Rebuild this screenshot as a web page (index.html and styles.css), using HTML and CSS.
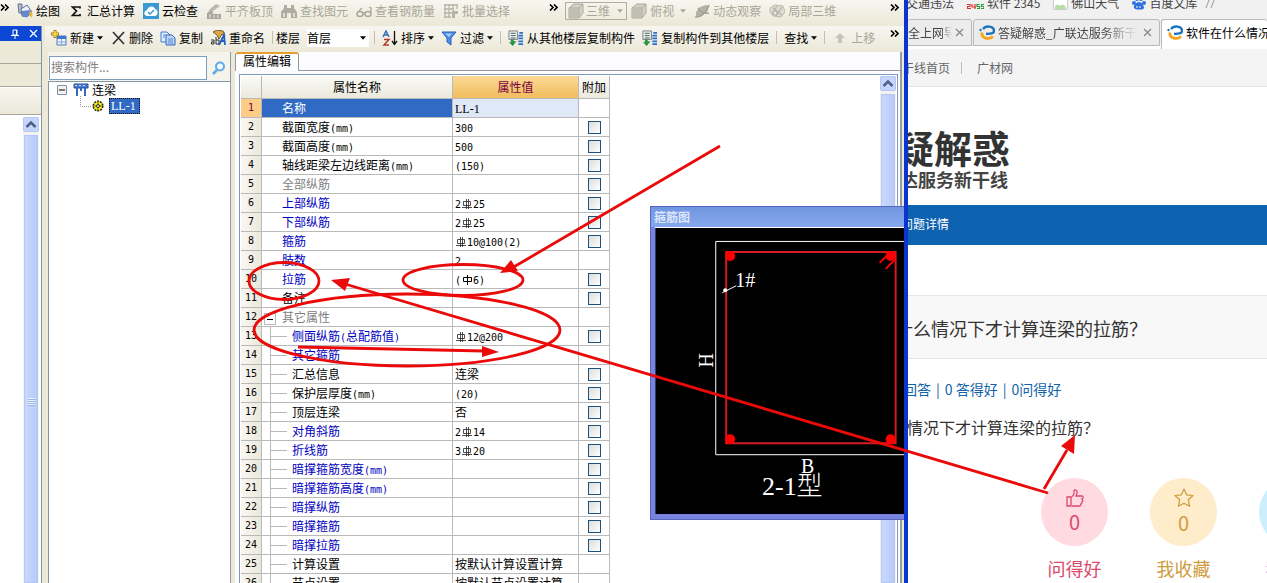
FILE: index.html
```html
<!DOCTYPE html>
<html lang="zh-CN">
<head>
<meta charset="utf-8">
<title>属性编辑</title>
<link rel="stylesheet" href="styles.css">
</head>
<body>
<svg class="defs" width="0" height="0" aria-hidden="true">
  <symbol id="rebar" viewBox="0 0 12 12"><path d="M2.500 3.500h7v4h-7zM5.500 1v10M7.500 1v10M1 9.500h10" fill="none" stroke="#222" stroke-width=".8"/></symbol>
  <symbol id="rebar-plain" viewBox="0 0 12 12"><path d="M2.500 3.500h8v4h-8zM6.500 1v10" fill="none" stroke="#000"/></symbol>
  <symbol id="caret" viewBox="0 0 7 4"><path d="M0 0h7L3.500 4z" fill="currentColor"/></symbol>
  <symbol id="more" viewBox="0 0 9 7"><path d="M1 .5l3 3-3 3M5 .5l3 3-3 3" fill="none" stroke="#000" stroke-width="1.600"/></symbol>
  <symbol id="swirl" viewBox="0 0 16 16"><path d="M4 4C7 0 15 1 15 6c0 2.500-4 3-8 2.800" fill="none" stroke="#1a75bd" stroke-width="2.400"/><path d="M3 7.500c-1 6 7 7.500 11 4" fill="none" stroke="#f6a21b" stroke-width="2.800"/><circle cx="1.500" cy="5" r="1.200" fill="#1a75bd"/></symbol>
  <symbol id="cube" viewBox="0 0 16 16"><path d="M1 5l5-4h9v9l-4 5H1z" fill="#d4d1c5" stroke="#aaa79c"/><path d="M1.500 5H11v10M11 5l4-4" fill="none" stroke="#aaa79c"/><path d="M2 6h8v8H2z" fill="#c1beb3"/></symbol>
  <symbol id="floors" viewBox="0 0 17 17"><path d="M1 1h9v9H1z" fill="#e7f2e7" stroke="#778"/><path d="M3 3.500h5M3 6h5M3 8.500h5" stroke="#456"/><path d="M12 3h4M11 6h5M11 9h5M11 12h5M11 15h5" stroke="#2b70c9" stroke-width="1.800"/><path d="M3 10h3v2h3l-4 5-4-4h2z" fill="#299445"/></symbol>
  <symbol id="up" viewBox="0 0 15 14"><path d="M2.500 9L7 4.500 11.500 9" fill="none" stroke="#4d6185" stroke-width="2.500"/></symbol>
</svg>

<section class="app" aria-label="构件属性">
  <div class="toolbar toolbar-main">
    <svg class="more"><use href="#more"/></svg>
    <div class="tools">
      <button class="tool"><svg class="ico" viewBox="0 0 16 16"><path d="M1 1h4v9H2z" fill="#b5bed0" stroke="#65718a"/><path d="M4 6l6-4 5 7-5 5-5-1z" fill="#e9eefa" stroke="#5b6d9b"/><path d="M5 8l8-1 2 3-5 4-5-1z" fill="#6888cc"/><path d="M13 8c3 1 3 6 1 6s-2-3-1-6z" fill="#e6b634"/></svg>绘图</button>
      <button class="tool"><svg class="ico" viewBox="0 0 16 16"><path d="M12 5.500V4H4.500l4 4-4 4.500H12V11" fill="none" stroke="#111" stroke-width="1.700"/></svg>汇总计算</button>
      <button class="tool"><svg class="ico" viewBox="0 0 16 16"><path d="M0 0h16v16H0z" fill="#399ad3"/><path d="M4 13c-4-1-3-5 0-6 1-4 7-5 8-1 4 1 3 7 0 7z" fill="#fff"/><path d="M5 9l2 2 4-4" fill="none" stroke="#399ad3" stroke-width="1.500"/></svg>云检查</button>
      <button class="tool" disabled><svg class="ico" viewBox="0 0 16 16"><path d="M3 7l7-6 4 2-7 5v3H2z" fill="#bbb8ad"/><path d="M1 10l5-2v3h9v5H1z" fill="#a9a69b"/><path d="M4 11v4M8 12v3M12 12v3" stroke="#eee"/></svg>平齐板顶</button>
      <button class="tool" disabled><svg class="ico" viewBox="0 0 16 16"><path d="M3 2h3v3h4V2h3v3l3 4v6h-6v-5H6v5H0V9l3-4z" fill="#aeaba1"/><path d="M2 10h2v4H2zM12 10h2v4h-2z" fill="#dedbd0"/></svg>查找图元</button>
      <button class="tool" disabled><svg class="ico" viewBox="0 0 16 16"><ellipse cx="4" cy="11" rx="3" ry="2.500" fill="none" stroke="#aaa79c" stroke-width="1.500"/><ellipse cx="12" cy="11" rx="3" ry="2.500" fill="none" stroke="#aaa79c" stroke-width="1.500"/><path d="M7 10h2M3 8l3-3M15 9V5l-2-1" fill="none" stroke="#aaa79c" stroke-width="1.300"/></svg>查看钢筋量</button>
      <button class="tool" disabled><svg class="ico" viewBox="0 0 16 16"><path d="M1 2h14M1 6h10M1 10h8M1 14h7M2 1v14M6 1v14M10 1v9M14 1v5" stroke="#b7b4a9" stroke-width="1.300"/><path d="M9 8h6v3h-3v4H9z" fill="#b7b4a9"/></svg>批量选择</button>
    </div>
    <svg class="more"><use href="#more"/></svg>
    <div class="tools tools-view">
      <button class="tool tool-boxed" disabled><svg class="ico"><use href="#cube"/></svg>三维<svg class="caret"><use href="#caret"/></svg></button>
      <button class="tool tool-drop" disabled><svg class="ico"><use href="#cube"/></svg>俯视<svg class="caret"><use href="#caret"/></svg></button>
      <button class="tool" disabled><svg class="ico" viewBox="0 0 16 16"><path d="M2 9l4-5 6-2 3 1-2 6-6 4-5 1z" fill="#b5b2a7"/><path d="M1 14c6 1 12-5 14-12M4 5c3 5 7 6 11 5" fill="none" stroke="#a09d92" stroke-width="1.400"/></svg>动态观察</button>
      <button class="tool" disabled><svg class="ico" viewBox="0 0 16 16"><path d="M1 5l5-3 8 1 2 6-4 5-8-1-3-4z" fill="#dedbd0" stroke="#bdbab0"/><path d="M3 11l5-8M7 13l6-9M4 5l9 7" stroke="#b7b4a9" stroke-width="1.300"/><circle cx="6" cy="10" r="2" fill="#eee" stroke="#aaa"/></svg>局部三维</button>
    </div>
    <svg class="more more-end"><use href="#more"/></svg>
  </div>

  <div class="workspace">
    <aside class="dock">
      <div class="dock-title"><svg width="10" height="10" viewBox="0 0 10 10"><path d="M3 1h4v5H3zM1 6.500h8M5 7v3M6.500 1v5" fill="none" stroke="#fff"/></svg><svg width="9" height="9" viewBox="0 0 9 9"><path d="M1 1l7 7M8 1L1 8" stroke="#fff" stroke-width="1.200"/></svg></div>
      <div class="dock-row"></div><div class="dock-row"></div><div class="dock-row dock-row-last"></div>
      <div class="dock-list"><div class="scroll"><div class="scroll-btn"><svg width="15" height="14"><use href="#up"/></svg></div><div class="scroll-thumb"><i class="grip"></i></div></div></div>
    </aside>

    <div class="editor">
      <div class="toolbar toolbar-edit">
        <button class="tool"><svg class="ico" viewBox="0 0 16 16"><path d="M6 6h9v9H6z" fill="#edf3fc" stroke="#5278b5"/><path d="M6 6h9v3H6z" fill="#3d76cc"/><path d="M10.500 9v6M6 12h9" stroke="#88a8d8"/><path d="M4 0v8M0 4h8" stroke="#a37d09" stroke-width="3"/><path d="M4 1v6M1 4h6" stroke="#ffe152" stroke-width="1.500"/></svg>新建<svg class="caret"><use href="#caret"/></svg></button>
        <button class="tool"><svg class="ico" viewBox="0 0 16 16"><path d="M3 2l11 12M14 2L3 14" stroke="#333" stroke-width="1.700"/></svg>删除</button>
        <button class="tool"><svg class="ico" viewBox="0 0 16 16"><path d="M1 2h6l3 3v7H1z" fill="#dceaff" stroke="#4c7ac6"/><path d="M6 5h6l3 3v7H6z" fill="#bed6fb" stroke="#3565b4"/><path d="M8 9h5M8 11h5M8 13h5M3 5h3M3 7h2" stroke="#568ad6"/></svg>复制</button>
        <button class="tool"><svg class="ico" viewBox="0 0 16 16"><path d="M3 2l4-2 6 1 2 5-3-2-3 5-2-4z" fill="#dda944" stroke="#765b2d"/><path d="M1 10h3v4H1.500v-2H4M6 7v7h3v-4H6" fill="none" stroke="#333"/><path d="M9 15l5-10 1 10M11 11h4" fill="none" stroke="#2360bd" stroke-width="1.800"/></svg>重命名</button>
        <i class="sep"></i>
        <label class="floor-label" for="floor">楼层</label>
        <span class="floor"><select id="floor"><option>首层</option></select><svg class="caret"><use href="#caret"/></svg></span>
        <i class="sep"></i>
        <button class="tool"><svg class="ico" viewBox="0 0 16 16"><path d="M1 7l3-6 3 6M2 5h4" fill="none" stroke="#366bb5" stroke-width="1.500"/><path d="M2 9.500h5L2 15h5" fill="none" stroke="#b5392b" stroke-width="1.500"/><path d="M12.500 1v13M10 11l2.500 3.500L15 11" fill="none" stroke="#111" stroke-width="1.300"/></svg>排序<svg class="caret"><use href="#caret"/></svg></button>
        <button class="tool"><svg class="ico" viewBox="0 0 16 16"><path d="M1 2h14l-5 6v7l-4-3V8z" fill="#4c8ee8" stroke="#2862b9"/><path d="M4 3.500h7L8 7z" fill="#a8cbff"/></svg>过滤<svg class="caret"><use href="#caret"/></svg></button>
        <i class="sep"></i>
        <button class="tool"><svg class="ico"><use href="#floors"/></svg>从其他楼层复制构件</button>
        <button class="tool"><svg class="ico"><use href="#floors"/></svg>复制构件到其他楼层</button>
        <i class="sep"></i>
        <button class="tool">查找<svg class="caret"><use href="#caret"/></svg></button>
        <i class="sep"></i>
        <button class="tool" disabled><svg class="ico" viewBox="0 0 16 16"><path d="M8 3l5 5h-3v5H6V8H3z" fill="#c6c3b8"/></svg>上移</button>
        <svg class="more more-end"><use href="#more"/></svg>
      </div>

      <div class="panes">
        <div class="parts">
          <div class="search"><input type="text" aria-label="搜索构件" placeholder="搜索构件..."><button class="search-btn" aria-label="搜索"><svg width="14" height="14" viewBox="0 0 14 14"><circle cx="8" cy="5.500" r="4" fill="#eef8ff" stroke="#62a8e2" stroke-width="2"/><path d="M5 9l-4 4" stroke="#62a8e2" stroke-width="2.500"/></svg></button></div>
          <div class="tree">
            <div class="node"><svg width="10" height="10" viewBox="0 0 10 10"><path d="M.5.500h9v9h-9z" fill="#f4f2ea" stroke="#7b93b0"/><path d="M2 5h6" stroke="#000"/></svg><svg class="beam" width="16" height="14" viewBox="0 0 16 14"><path d="M1 1h14v4H1z" fill="#4c7bcf" stroke="#244e9d"/><path d="M4 5v8M8 5v3M12 5v8" stroke="#3668bb" stroke-width="2"/><path d="M2 2.500h12" stroke="#c3d8ff" stroke-dasharray="2 2"/></svg>连梁</div>
            <div class="node node-child"><svg class="twig" width="12" height="12"><path d="M.5 0v10.500H12" fill="none" stroke="#9a9a9a" stroke-dasharray="1 1"/></svg><svg width="12" height="12" viewBox="0 0 12 12"><circle cx="6" cy="6" r="4.800" fill="#f6ec18" stroke="#222" stroke-width="1.500" stroke-dasharray="2 1"/><circle cx="6" cy="6" r="1.500" fill="#fff" stroke="#222"/><path d="M6 1v3M6 8v3M1 6h3M8 6h3" stroke="#665f00"/></svg><span class="picked">LL-1</span></div>
          </div>
        </div>

        <div class="props">
          <div class="tabs"><button class="tab">属性编辑</button></div>
          <div class="frame">
            <table class="grid">
              <thead><tr><th class="num"></th><th class="name">属性名称</th><th class="val hot">属性值</th><th class="chk">附加</th></tr></thead>
              <tbody>
              <tr class="sel"><th>1</th><td>名称</td><td><b class="serif">LL-1</b></td><td></td></tr>
              <tr><th>2</th><td>截面宽度<b>(mm)</b></td><td><b>300</b></td><td><input type="checkbox" aria-label="附加 2"></td></tr>
              <tr><th>3</th><td>截面高度<b>(mm)</b></td><td><b>500</b></td><td><input type="checkbox" aria-label="附加 3"></td></tr>
              <tr><th>4</th><td>轴线距梁左边线距离<b>(mm)</b></td><td><b>(150)</b></td><td><input type="checkbox" aria-label="附加 4"></td></tr>
              <tr class="mute"><th>5</th><td>全部纵筋</td><td></td><td><input type="checkbox" aria-label="附加 5"></td></tr>
              <tr class="blue"><th>6</th><td>上部纵筋</td><td><b>2</b><svg class="bar"><use href="#rebar"/></svg><b>25</b></td><td><input type="checkbox" aria-label="附加 6"></td></tr>
              <tr class="blue"><th>7</th><td>下部纵筋</td><td><b>2</b><svg class="bar"><use href="#rebar"/></svg><b>25</b></td><td><input type="checkbox" aria-label="附加 7"></td></tr>
              <tr class="blue"><th>8</th><td>箍筋</td><td><svg class="bar"><use href="#rebar"/></svg><b>10@100(2)</b></td><td><input type="checkbox" aria-label="附加 8"></td></tr>
              <tr class="blue"><th>9</th><td>肢数</td><td><b>2</b></td><td></td></tr>
              <tr class="blue"><th>10</th><td>拉筋</td><td><b>(</b><svg class="bar"><use href="#rebar-plain"/></svg><b>6)</b></td><td><input type="checkbox" aria-label="附加 10"></td></tr>
              <tr><th>11</th><td>备注</td><td></td><td><input type="checkbox" aria-label="附加 11"></td></tr>
              <tr class="mute group"><th>12</th><td><button class="fold" aria-label="折叠"></button>其它属性</td><td></td><td></td></tr>
              <tr class="blue sub"><th>13</th><td>侧面纵筋<b>(</b>总配筋值<b>)</b></td><td><svg class="bar"><use href="#rebar"/></svg><b>12@200</b></td><td><input type="checkbox" aria-label="附加 13"></td></tr>
              <tr class="blue sub"><th>14</th><td>其它箍筋</td><td></td><td></td></tr>
              <tr class="sub"><th>15</th><td>汇总信息</td><td>连梁</td><td><input type="checkbox" aria-label="附加 15"></td></tr>
              <tr class="sub"><th>16</th><td>保护层厚度<b>(mm)</b></td><td><b>(20)</b></td><td><input type="checkbox" aria-label="附加 16"></td></tr>
              <tr class="sub"><th>17</th><td>顶层连梁</td><td>否</td><td><input type="checkbox" aria-label="附加 17"></td></tr>
              <tr class="blue sub"><th>18</th><td>对角斜筋</td><td><b>2</b><svg class="bar"><use href="#rebar"/></svg><b>14</b></td><td><input type="checkbox" aria-label="附加 18"></td></tr>
              <tr class="blue sub"><th>19</th><td>折线筋</td><td><b>3</b><svg class="bar"><use href="#rebar"/></svg><b>20</b></td><td><input type="checkbox" aria-label="附加 19"></td></tr>
              <tr class="blue sub"><th>20</th><td>暗撑箍筋宽度<b>(mm)</b></td><td></td><td><input type="checkbox" aria-label="附加 20"></td></tr>
              <tr class="blue sub"><th>21</th><td>暗撑箍筋高度<b>(mm)</b></td><td></td><td><input type="checkbox" aria-label="附加 21"></td></tr>
              <tr class="blue sub"><th>22</th><td>暗撑纵筋</td><td></td><td><input type="checkbox" aria-label="附加 22"></td></tr>
              <tr class="blue sub"><th>23</th><td>暗撑箍筋</td><td></td><td><input type="checkbox" aria-label="附加 23"></td></tr>
              <tr class="blue sub"><th>24</th><td>暗撑拉筋</td><td></td><td><input type="checkbox" aria-label="附加 24"></td></tr>
              <tr class="sub"><th>25</th><td>计算设置</td><td>按默认计算设置计算</td><td></td></tr>
              <tr class="sub"><th>26</th><td>节点设置</td><td>按默认节点设置计算</td><td></td></tr>
              </tbody>
            </table>
            <div class="scroll"><div class="scroll-btn"><svg width="15" height="14"><use href="#up"/></svg></div><div class="scroll-thumb"></div></div>
          </div>
        </div>
      </div>
    </div>
  </div>

  <div class="float" role="dialog" aria-label="箍筋图">
    <div class="float-title">箍筋图</div>
    <svg class="section" width="260" height="287" viewBox="655 228 260 287">
      <path d="M655 228h260v287H655z" fill="#000"/>
      <path d="M915 241.500H715.500v214H915" fill="none" stroke="#fff"/>
      <path d="M726 252h170v192H726z" fill="none" stroke="#d51a20" stroke-width="2"/>
      <g fill="#f00"><circle cx="730" cy="256" r="5"/><circle cx="891" cy="256" r="5"/><circle cx="730" cy="440" r="5"/><circle cx="891" cy="440" r="5"/></g>
      <path d="M880 263l8-8M886 269l9-9" stroke="#f00" stroke-width="2"/>
      <path d="M722 293l14-7" stroke="#fff"/><circle cx="725" cy="290.500" r="2" fill="#fff"/>
      <g class="cad"><text x="735" y="287">1#</text><text x="801" y="474">B</text><text x="762" y="496" class="cad-big">2-1型</text><text transform="translate(713 368) rotate(-90)">H</text></g>
    </svg>
  </div>
</section>

<section class="browser" aria-label="浏览器">
  <nav class="bookmarks">
    <a href="#" class="first">交通违法</a>
    <a href="#"><svg width="17" height="14" viewBox="0 0 17 14"><path d="M0 8.500h3v2H.5v2H4M5 8v3h4M8 8v5" fill="none" stroke="#d33" stroke-width="1.200"/><path d="M12.500 8.500H10v2h2.500v2H10M17 8.500h-2.500v2H17v2h-3" fill="none" stroke="#2a9a3a" stroke-width="1.200"/></svg>软件 2345</a>
    <a href="#"><svg width="15" height="14" viewBox="0 0 15 14"><path d="M.5.500h14v13H.5z" fill="#fff" stroke="#ccc"/><path d="M2 13c-1-5 4-5 5-3 3-3 6 0 6 3z" fill="#b9dda9"/></svg>佛山天气</a>
    <a href="#"><svg width="14" height="14" viewBox="0 0 14 14"><g fill="#2d71df"><circle cx="2" cy="7" r="2"/><circle cx="5" cy="3" r="2"/><circle cx="9" cy="3" r="2"/><circle cx="12" cy="7" r="2"/><path d="M7 6c3 0 5 4 5 6s-9 2-10 0 2-6 5-6z"/></g><path d="M5 10v2M8 10v2" stroke="#fff"/></svg>百度文库</a>
    <svg class="book-more" width="11" height="9" viewBox="0 0 11 9"><path d="M4 0L1 8M9 0L6 8" fill="none" stroke="#999"/></svg>
  </nav>
  <div class="btabs">
    <div class="btab btab-first"><span>全上网导</span><button aria-label="关闭"><svg width="9" height="9" viewBox="0 0 9 9"><path d="M1 1l7 7M8 1L1 8" stroke="#888" stroke-width="1.300"/></svg></button></div>
    <div class="btab btab-mid"><svg class="ico"><use href="#swirl"/></svg><span>答疑解惑_广联达服务新干</span><button aria-label="关闭"><svg width="9" height="9" viewBox="0 0 9 9"><path d="M1 1l7 7M8 1L1 8" stroke="#888" stroke-width="1.300"/></svg></button></div>
    <div class="btab btab-on"><svg class="ico"><use href="#swirl"/></svg><span>软件在什么情况下</span></div>
  </div>
  <nav class="sitebar"><a href="#">干线首页</a><i></i><a href="#">广材网</a></nav>
  <header class="brand"><div class="brand-big">疑解惑</div><div class="brand-sub">达服务新干线</div></header>
  <div class="crumb">问题详情</div>
  <h1 class="title">什么情况下才计算连梁的拉筋<span class="mark">？</span></h1>
  <p class="stats"><span>回答</span>|<span>0 答得好</span>|<span>0问得好</span></p>
  <p class="question">情况下才计算连梁的拉筋<span class="mark">？</span></p>
  <div class="votes">
    <button class="vote vote-good"><span class="disc"><svg width="18" height="18" viewBox="0 0 18 18"><path d="M1 8h4v9H1zM5 8c3-1 3-3 3-6 0-2 4-1 3 2l-1 3h6c2 0 1 3 0 3 1 1 1 2 0 3 0 1 0 2-1 2 0 1-1 2-2 2H6" fill="none" stroke="currentColor" stroke-width="1.300"/></svg>0</span>问得好</button>
    <button class="vote vote-fav"><span class="disc"><svg width="20" height="20" viewBox="0 0 20 20"><path d="M10 1l2.600 5.800 6.400.7-4.700 4.300 1.300 6.500L10 15.200l-5.600 3.100 1.300-6.500L1 7.500l6.400-.7z" fill="none" stroke="currentColor" stroke-width="1.200" stroke-linejoin="round"/></svg>0</span>我收藏</button>
    <button class="vote vote-more"><span class="disc"></span>我来答</button>
  </div>
</section>

<svg class="marks" width="1267" height="583" viewBox="0 0 1267 583" aria-hidden="true">
  <g fill="none" stroke="#eb0a0a" stroke-width="2.800">
    <ellipse cx="284" cy="281" rx="35" ry="18.500"/>
    <ellipse cx="463" cy="280" rx="60" ry="15.500"/>
    <ellipse cx="407" cy="330" rx="153" ry="36"/>
    <path d="M720 146L512 268M298 347l186 4M1048 493L345 284M1044 489l23-39"/>
  </g>
  <path d="M500 273l11-13 7 11zM499 352l-17-6v11zM331 280l19-2-5 13zM1075 435l-14 11 13 8z" fill="#eb0a0a"/>
</svg>
</body>
</html>
```
FILE: styles.css
```css
* { box-sizing: border-box; }
body {
  margin: 0;
  height: 100vh;
  overflow: hidden;
  position: relative;
  display: grid;
  grid-template-columns: 908fr 359fr;
  background: #fff;
  color: #000;
  font: 12px/16px "Noto Sans CJK SC", sans-serif;
}
button, input, select { font: inherit; color: inherit; }
button { border: 0; padding: 0; background: none; }
svg { flex: none; }
.defs, .marks { position: absolute; }
.marks { top: 0; left: 0; pointer-events: none; }

/* application window */
.app {
  position: relative;
  min-width: 0;
  height: 100vh;
  display: flex;
  flex-direction: column;
  overflow: hidden;
  background: #ece9d8;
  border-right: 4px solid #0a35cf;
}
.toolbar {
  display: flex;
  align-items: center;
  flex: none;
  white-space: nowrap;
  background: linear-gradient(#f7f6f0, #ece9d9);
}
.toolbar-main { height: 24px; padding-bottom: 2px; }
.tools { display: flex; gap: 8px; padding: 0 39px 0 8px; }
.tools-view { padding: 0 0 0 7px; }
.more { width: 9px; height: 7px; margin-bottom: 8px; }
.more-end { margin-left: auto; margin-right: 5px; }
.tool { display: flex; align-items: center; gap: 3px; }
.tool:disabled { color: #a9a698; }
.ico { width: 16px; height: 16px; }
.caret { width: 6px; height: 4px; }
.tool-boxed { border: 1px solid #b1aea2; padding: 0 3px 0 2px; gap: 2px; margin-right: -4px; }
.tool-boxed .caret { margin-left: 5px; }
.tool-drop .caret { margin-left: 3px; }
.workspace { flex: 1; min-height: 0; display: flex; gap: 3px; padding-top: 2px; }

.dock { width: 42px; display: flex; flex-direction: column; border-right: 1px solid #8296a6; }
.dock-title { height: 15px; background: #0c48d4; display: flex; align-items: center; justify-content: flex-end; gap: 9px; padding-right: 3px; }
.dock-row { height: 23px; background: #ece9d8; border-bottom: 1px solid #aaa79a; }
.dock-row-last { height: 28px; background: linear-gradient(#f8f7f1, #ebe8d8); border-top: 1px solid #fff; }
.dock-list { flex: 1; background: #fff; display: flex; justify-content: flex-end; padding: 2px 2px 0 0; }

.scroll { width: 16px; display: flex; flex-direction: column; gap: 3px; background: #f4f3ee; }
.scroll-btn { height: 15px; border: 1px solid #b4c7f4; border-radius: 2px; background: #c6d5fc; display: flex; justify-content: center; }
.scroll-thumb { flex: 1; margin: 0 1px; border: 1px solid #b4c8f6; background: linear-gradient(90deg, #c9d8fd, #b8cbf7); }
.grip { display: block; width: 7px; height: 8px; margin: 262px auto 0; background: repeating-linear-gradient(#eef4fe 0 1px, #98b3e8 1px 2px); }

.editor { flex: 1; min-width: 0; display: flex; flex-direction: column; }
.toolbar-edit { height: 25px; padding: 0 0 2px 6px; gap: 7px; }
.sep { width: 1px; height: 13px; background: #c3c0b3; }
.floor-label { margin-left: -4px; }
.floor { width: 62px; height: 18px; background: #fff; display: flex; align-items: center; padding-right: 3px; margin-right: -2px; }
.floor select { flex: 1; appearance: none; border: 0; background: none; padding: 0; height: 16px; line-height: 16px; outline: 0; }

.panes { flex: 1; min-height: 0; display: flex; gap: 4px; padding: 1px 2px 0 3px; }
.parts { width: 183px; display: flex; flex-direction: column; padding-top: 4px; border-right: 1px solid #8d9ba4; background: #f4f3ec; }
.search { display: flex; height: 24px; margin-bottom: 1px; }
.search input { width: 158px; height: 24px; margin-left: 1px; border: 1px solid #7f9db9; padding: 0 1px 4px; background: #fff; outline: 0; }
.search input::placeholder { color: #808080; opacity: 1; }
.search-btn { flex: 1; display: flex; align-items: center; justify-content: center; }
.tree { flex: 1; background: #fff; border: 1px solid #8296a6; border-width: 1px 0 0 1px; padding: 0 0 0 8px; }
.node { display: flex; align-items: center; height: 16px; }
.beam { margin: 0 3px 0 6px; }
.node-child { padding-left: 23px; }
.twig { margin-top: -8px; }
.picked { width: 31px; margin-left: 5px; padding: 0 1px; height: 16px; line-height: 14px; border: 1px dotted #111; background: #316ac5; color: #fff; font-family: "Liberation Serif", serif; }

.props { flex: 1; min-width: 0; display: flex; flex-direction: column; background: #fcfcfe; border-right: 2px solid #929da4; }
.tabs { height: 19px; flex: none; display: flex; border-bottom: 1px solid #919b9c; }
.tab { width: 64px; height: 19px; line-height: 14px; padding-bottom: 3px; background: #fff; border: 1px solid #919b9c; border-top: 2px solid #e8a02c; border-bottom: 0; border-radius: 3px 3px 0 0; }
.frame { flex: 1; min-height: 0; margin: 3px 2px 0 4px; border: 1px solid #7f9db9; border-bottom: 0; padding: 1px 1px 0; display: flex; justify-content: space-between; background: #fff; overflow: hidden; }

.grid { table-layout: fixed; width: 369px; height: 0; border-collapse: separate; border-spacing: 0; align-self: flex-start; }
.grid th, .grid td { height: 19px; padding: 0; font-weight: 400; line-height: 16px; white-space: nowrap; border: 1px solid #b9b9b9; border-width: 0 1px 1px 0; }
.grid thead th { height: 23px; background: linear-gradient(#fbfbf8, #ebe9dc); }
.grid thead .hot { background: linear-gradient(#fad998, #f1bd5c); color: #7a0040; }
.num { width: 21px; }
.name { width: 191px; }
.val { width: 126px; }
.chk { width: 31px; }
.grid tbody th { font: 10px/16px "DejaVu Sans Mono", monospace; background: linear-gradient(90deg, #f9f8f3, #ebe8da); }
.grid td:nth-child(2) { padding-left: 20px; }
.grid td:nth-child(3) { padding-left: 2px; }
.grid td:nth-child(4) { text-align: center; }
.grid b { font: 10px/14px "DejaVu Sans Mono", monospace; }
.grid .serif { font: 12px/14px "Liberation Serif", serif; }
.grid .blue td:nth-child(2) { color: #0000c0; }
.grid .mute td:nth-child(2) { color: #808080; }
.grid .sel th { background: #fbcd86; color: #700030; }
.grid .sel td:nth-child(2) { background: #316ac5; color: #fff; }
.grid .sel td:nth-child(3) { background: #dfe8f7; }
.grid .sub td:nth-child(2) {
  padding-left: 30px;
  background: linear-gradient(#b9b9b9, #b9b9b9) 9px 9px / 16px 1px no-repeat, linear-gradient(#b9b9b9, #b9b9b9) 8px 0 / 1px 100% no-repeat;
}
.grid .group td:nth-child(2) { padding-left: 2px; }
.fold { width: 12px; height: 12px; margin-right: 6px; vertical-align: -2px; border: 1px solid #b9b9b9; background: linear-gradient(#000, #000) center / 6px 1px no-repeat; }
.bar { width: 12px; height: 12px; vertical-align: -2px; }
.grid input { appearance: none; display: block; width: 13px; height: 13px; margin: 1px auto 0; border: 1px solid #1c5180; background: linear-gradient(135deg, #dcdcd7, #fff); }

/* section preview window, floats above the grid */
.float { position: absolute; left: 650px; top: 206px; right: 0; height: 314px; overflow: hidden; padding-left: 4px; background: #7883df; border: 1px solid #5965bd; border-right: 0; }
.float-title { height: 20px; line-height: 20px; margin-left: -4px; padding-left: 3px; font-weight: 700; color: #dce6fb; background: linear-gradient(#7196e0, #86a8ee); }
.section { display: block; border-top: 1px solid #fff; }
.cad { font: 20px "Liberation Serif", "Noto Sans CJK SC", serif; fill: #fff; }
.cad-big { font-size: 26px; font-weight: 300; }

/* browser window */
.browser { min-width: 0; overflow: hidden; display: flex; flex-direction: column; white-space: nowrap; color: #444; }
.browser a { color: inherit; text-decoration: none; }
.bookmarks { height: 19px; flex: none; display: flex; align-items: flex-start; gap: 13px; background: #f1f1f1; }
.bookmarks a { display: flex; align-items: center; gap: 3px; margin-top: -6px; height: 18px; }
.bookmarks .first { margin-left: -2px; }
.book-more { margin-left: -5px; }
.btabs { height: 30px; flex: none; display: flex; align-items: stretch; background: #f1f1f1; border-bottom: 3px solid #fff; }
.btab { display: flex; align-items: center; gap: 3px; background: #ececec; border: 1px solid #b8b8b8; border-radius: 3px 3px 0 0; margin-right: 1px; overflow: hidden; }
.btab button { display: flex; margin-left: auto; }
.btab-first { width: 64px; border-left: 0; padding-right: 7px; }
.btab-first span { width: 44px; overflow: hidden; }
.btab-mid { width: 187px; padding: 0 7px 0 5px; }
.btab-mid span, .btab-first span { mask-image: linear-gradient(90deg, #000 75%, transparent); }
.btab-on { flex: 1; min-width: 0; margin: 0 0 -3px; padding: 0 0 3px 5px; background: #fff; border-bottom: 0; border-right: 0; color: #000; }
.sitebar { height: 38px; flex: none; display: flex; align-items: center; background: #f4f4f4; border-bottom: 1px solid #e4e4e4; color: #666; }
.sitebar a:first-child { margin-left: -6px; }
.sitebar i { width: 1px; height: 12px; margin: 0 15px 0 11px; background: #bbb; }
.brand { height: 118px; flex: none; padding-top: 38px; margin-left: -12px; color: #333; font-weight: 700; }
.brand-big { font-size: 38px; line-height: 44px; }
.brand-sub { font-size: 18px; line-height: 20px; padding-left: 4px; color: #444; }
.crumb { height: 40px; flex: none; line-height: 38px; background: #0e63b0; color: #fff; text-indent: -7px; }
.title { height: 64px; flex: none; margin: 50px 0 0; font-size: 18px; font-weight: 400; line-height: 64px; text-indent: -13px; background: #f8f8f8; border: 1px solid #e6e6e6; border-width: 1px 0; color: #333; }
.mark { font-family: "Noto Sans CJK TC", sans-serif; }
.stats { display: flex; gap: 5px; margin: 19px 0 0 -5px; font-size: 14px; line-height: 22px; color: #1163ab; }
.question { margin: 15px 0 0; font-size: 16px; line-height: 24px; text-indent: -1px; color: #333; }
.votes { display: flex; gap: 42px; margin-top: 39px; padding-left: 133px; }
.vote { flex: none; width: 67px; font-size: 18px; line-height: 22px; }
.disc { width: 67px; height: 68px; margin-bottom: 11px; border-radius: 50%; display: flex; flex-direction: column; align-items: center; justify-content: center; gap: 3px; font-size: 20px; line-height: 24px; padding-bottom: 2px; }
.vote-good { color: #d94a6b; }
.vote-good .disc { background: #ffdae0; }
.vote-fav { color: #cf9c3f; }
.vote-fav .disc { background: #feeccb; }
.vote-more { color: #8c9ce0; }
.vote-more .disc { background: #cdeefd; }
```
